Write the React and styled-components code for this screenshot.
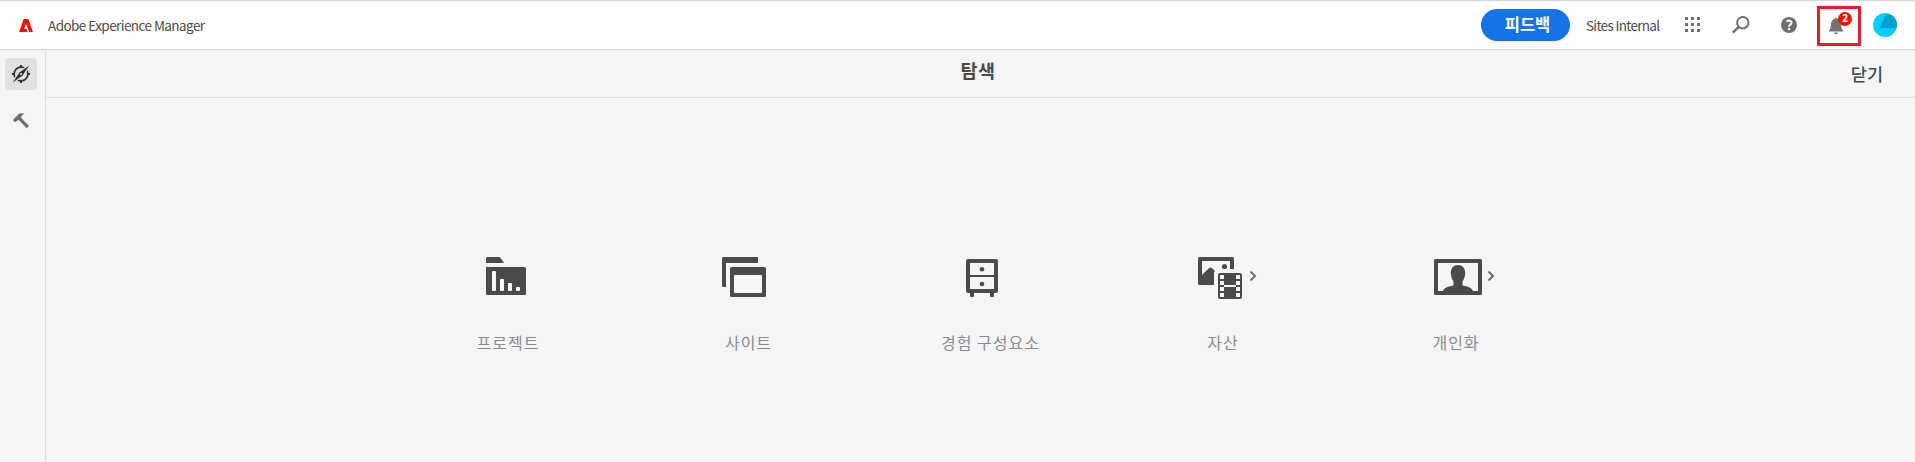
import React from "react";
import styled, { createGlobalStyle } from "styled-components";

const GlobalStyle = createGlobalStyle`
  * { box-sizing: border-box; }
  body {
    margin: 0;
    background: #f5f5f5;
    font-family: "Noto Sans CJK KR", "Noto Sans", sans-serif;
    color: #4b4b4b;
  }
`;

const Page = styled.div`
  display: flex;
  flex-direction: column;
  height: 100vh;
  overflow: hidden;
`;

const Header = styled.header`
  display: flex;
  align-items: center;
  flex: none;
  height: 50px;
  padding-left: 19px;
  background: #fff;
  border-top: 1px solid #d8d8d8;
  border-bottom: 1px solid #d3d3d3;
`;

const Brand = styled.span`
  margin-left: 15px;
  font-size: 13.5px;
  line-height: 20px;
  letter-spacing: -0.56px;
  white-space: nowrap;
`;

const Actions = styled.div`
  display: flex;
  align-items: center;
  margin-left: auto;
  height: 48px;
`;

const FeedbackButton = styled.button`
  width: 89px;
  height: 32px;
  padding: 0 0 2px 4px;
  border: 0;
  border-radius: 16px;
  background: #1473e6;
  color: #fff;
  font: bold 16.5px/28px "Noto Sans CJK KR", sans-serif;
  white-space: nowrap;
`;

const Organization = styled.span`
  width: 74px;
  margin: 0 9px 0 16px;
  font-size: 13.5px;
  line-height: 20px;
  letter-spacing: -0.68px;
  white-space: nowrap;
`;

const IconButton = styled.button`
  display: flex;
  align-items: center;
  justify-content: center;
  width: 48px;
  height: 48px;
  padding: 0;
  border: 0;
  background: none;
  color: #6e6e6e;
`;

const Notifications = styled.button`
  position: relative;
  display: flex;
  width: 44px;
  height: 40px;
  margin: 2px 12px 0 4px;
  padding: 8px 0 0 8px;
  border: 3px solid #ed1c24;
  background: none;
  color: #747474;
`;

const Badge = styled.span`
  position: absolute;
  top: 3px;
  left: 18px;
  width: 14px;
  height: 14px;
  border-radius: 50%;
  background: #fa0f00;
  color: #fff;
  font: bold 10px/13px "Open Sans", sans-serif;
  text-align: center;
`;

const Avatar = styled.svg`
  margin-right: 18px;
`;

const Body = styled.div`
  display: flex;
  flex: 1;
`;

const Rail = styled.nav`
  display: flex;
  flex-direction: column;
  align-items: center;
  gap: 15px;
  width: 46px;
  padding: 8px 4px 0 0;
  border-right: 1px solid #dcdcdc;
`;

const RailButton = styled.button`
  display: flex;
  align-items: center;
  justify-content: center;
  width: 32px;
  height: 32px;
  padding: 0;
  border: 0;
  border-radius: 4px;
  background: ${(p) => (p.$active ? "#e1e1e1" : "transparent")};
  color: ${(p) => (p.$active ? "#323232" : "#6e6e6e")};
`;

const Main = styled.main`
  flex: 1;
`;

const TitleBar = styled.div`
  display: grid;
  grid-template-columns: 1fr auto 1fr;
  height: 48px;
  border-bottom: 1px solid #dedede;
`;

const Title = styled.h1`
  grid-column: 2;
  margin: 0;
  padding: 7px 5px 0 0;
  font-size: 18.5px;
  font-weight: 700;
  line-height: 26px;
  letter-spacing: 0.5px;
`;

const CloseButton = styled.button`
  justify-self: end;
  align-self: start;
  margin-top: 11px;
  padding: 0 32px 0 0;
  border: 0;
  background: none;
  color: #4b4b4b;
  font: 500 17.5px/26px "Noto Sans CJK KR", sans-serif;
`;

const Tiles = styled.div`
  display: grid;
  grid-template-columns: repeat(5, 238px);
  justify-content: center;
  padding: 154px 0 0 3px;
`;

const Tile = styled.a`
  display: flex;
  flex-direction: column;
  align-items: center;
`;

const TileArt = styled.div`
  display: grid;
  grid-template-columns: 24px 48px 24px;
  align-items: center;
  color: #4b4b4b;
`;

const TileIcon = styled.svg`
  grid-column: 2;
`;

const Chevron = styled.svg`
  margin-left: 5px;
`;

const TileLabel = styled.span`
  margin-top: 29px;
  margin-left: ${(p) => p.$shift}px;
  color: #8c8c8c;
  font-size: 16px;
  line-height: 26px;
  letter-spacing: 1px;
  white-space: nowrap;
`;

const glyphs = {
  projects: (
    <>
      <path d="M4 11V6.500Q4 5 5.500 5H17Q18 5 18.600 5.900L22 11Z" />
      <path fillRule="evenodd" d="M4 15H42.500Q44 15 44 16.500V41.500Q44 43 42.500 43H5.500Q4 43 4 41.500ZM10 20V38Q10 39 11 39H13Q14 39 14 38V20Q14 19 13 19H11Q10 19 10 20ZM18 28V38Q18 39 19 39H21Q22 39 22 38V28Q22 27 21 27H19Q18 27 18 28ZM26 32V38Q26 39 27 39H29Q30 39 30 38V32Q30 31 29 31H27Q26 31 26 32ZM34 36V38Q34 39 35 39H37Q38 39 38 38V36Q38 35 37 35H35Q34 35 34 36Z" />
    </>
  ),
  sites: (
    <>
      <path d="M3.500 5H38V11H6V35H3.500Q2 35 2 33.500V6.500Q2 5 3.500 5Z" />
      <path fillRule="evenodd" d="M11.500 15H44.500Q46 15 46 16.500V43.500Q46 45 44.500 45H11.500Q10 45 10 43.500V16.500Q10 15 11.500 15ZM14 23V41H42V23Z" />
    </>
  ),
  fragments: (
    <>
      <path fillRule="evenodd" d="M10 7H38Q40 7 40 9V39Q40 41 38 41H36V44Q36 45 35 45H33Q32 45 32 44V41H16V44Q16 45 15 45H13Q12 45 12 44V41H10Q8 41 8 39V9Q8 7 10 7ZM12 11V23H36V11ZM12 25V37H36V25Z" />
      <circle cx="24" cy="17.200" r="2.300" />
      <circle cx="24" cy="32" r="2.300" />
    </>
  ),
  assets: (
    <>
      <path d="M3.500 5H36.500Q38 5 38 6.500V17H34V9H6V23L12.800 16.200Q14.500 14.800 16.200 16.200L19 19Q18 20 18 21V33H3.500Q2 33 2 31.500V6.500Q2 5 3.500 5Z" />
      <circle cx="28.500" cy="14.500" r="2.600" />
      <path fillRule="evenodd" d="M24 21H44Q46 21 46 23V45Q46 47 44 47H24Q22 47 22 45V23Q22 21 24 21ZM24 23V27H28V23ZM24 29V33H28V29ZM24 35V39H28V35ZM24 41V45H28V41ZM40 23V27H44V23ZM40 29V33H44V29ZM40 35V39H44V35ZM40 41V45H44V41ZM28 33V35H40V33Z" />
    </>
  ),
  personalization: (
    <>
      <path fillRule="evenodd" d="M1.500 7H46.500Q48 7 48 8.500V41.500Q48 43 46.500 43H1.500Q0 43 0 41.500V8.500Q0 7 1.500 7ZM4 11V39H44V11Z" />
      <path d="M24 13C28.500 13 31.200 16 31.200 21C31.200 25 29.700 27.700 28.500 29.500V33.500C34 34.500 38 35.800 39 39H9C10 35.800 14 34.500 19.500 33.500V29.500C18.300 27.700 16.800 25 16.800 21C16.800 16 19.500 13 24 13Z" />
    </>
  ),
};

const tiles = [
  { icon: "projects", label: "프로젝트", shift: 4 },
  { icon: "sites", label: "사이트", shift: 9 },
  { icon: "fragments", label: "경험 구성요소", shift: 17 },
  { icon: "assets", label: "자산", shift: 6, more: true },
  { icon: "personalization", label: "개인화", shift: -4, more: true },
];

function AdobeLogo() {
  return (
    <svg width="14" height="13" viewBox="0 0 14 13" fill="#fa0f00">
      <path d="M0 13L4.700 0H9.300L14 13H10.200L7 4.800L5.100 9.700H7.500L8.700 13Z" />
    </svg>
  );
}

function CompassIcon() {
  return (
    <svg width="18" height="18" viewBox="0 0 18 18" fill="currentColor">
      <circle cx="9" cy="9" r="6.900" fill="none" stroke="currentColor" strokeWidth="1.700" />
      <path d="M8 0H10V3H8ZM8 15H10V18H8ZM0 8H3V10H0ZM15 8H18V10H15Z" />
      <path d="M17.200 .6L10.600 10.600L.8 17.400L7.400 7.400Z" stroke="#e1e1e1" strokeWidth="2.400" paintOrder="stroke" />
      <circle cx="9" cy="9" r="1.100" fill="#e1e1e1" />
    </svg>
  );
}

function HammerIcon() {
  return (
    <svg width="18" height="18" viewBox="0 0 18 18" fill="currentColor">
      <path d="M1 8.500L2 6.700L6.500 2.200Q8.500 .7 12.300 1.700L9.300 4.200V6L17 13.900L14.800 16.200L7 8.300L5.500 8.200L3.200 10.300Z" />
    </svg>
  );
}

function AppsIcon() {
  return (
    <svg width="16" height="16" viewBox="0 0 16 16" fill="currentColor">
      {[0, 6, 12].map((y) =>
        [0, 6, 12].map((x) => <rect key={`${x}-${y}`} x={x} y={y} width="3" height="3" />)
      )}
    </svg>
  );
}

function SearchIcon() {
  return (
    <svg width="18" height="18" viewBox="0 0 18 18" fill="none" stroke="currentColor">
      <circle cx="10.800" cy="6.700" r="5.700" strokeWidth="1.900" />
      <path d="M6.700 10.800L.9 16.600" strokeWidth="2.400" />
    </svg>
  );
}

function HelpIcon() {
  return (
    <svg width="16" height="16" viewBox="0 0 16 16">
      <circle cx="8" cy="8" r="8" fill="currentColor" />
      <path d="M5.500 4.300Q8 3 9.700 4.100Q11.500 5.600 9.500 7.400Q8 8.600 8.200 9.700" fill="none" stroke="#fff" strokeWidth="2" />
      <circle cx="8.100" cy="12.100" r="1.300" fill="#fff" />
    </svg>
  );
}

function BellIcon() {
  return (
    <svg width="16" height="18" viewBox="0 0 16 18" fill="currentColor">
      <path d="M6.500 2Q6.500 .5 8 .5T9.500 2Q13 3 13 7Q13 11 14 12.300L15 13.300V14.500H1V13.300L2 12.300Q3 11 3 7Q3 3 6.500 2ZM6 15.500H10Q9.700 17.200 8 17.200T6 15.500Z" />
    </svg>
  );
}

export default function App() {
  return (
    <>
      <GlobalStyle />
      <Page>
        <Header>
          <AdobeLogo />
          <Brand>Adobe Experience Manager</Brand>
          <Actions>
            <FeedbackButton>피드백</FeedbackButton>
            <Organization>Sites Internal</Organization>
            <IconButton aria-label="Apps"><AppsIcon /></IconButton>
            <IconButton aria-label="Search"><SearchIcon /></IconButton>
            <IconButton aria-label="Help"><HelpIcon /></IconButton>
            <Notifications>
              <BellIcon />
              <Badge>2</Badge>
            </Notifications>
            <Avatar width="24" height="24" viewBox="0 0 24 24">
              <circle cx="12" cy="12" r="12" fill="#00ceff" />
              <path d="M12.300 2.700L6.500 15H23.600A12 12 0 0 0 20.500 3.500Q16 0 12.300 2.700Z" fill="#00a0cc" />
            </Avatar>
          </Actions>
        </Header>
        <Body>
          <Rail>
            <RailButton $active aria-label="Navigation"><CompassIcon /></RailButton>
            <RailButton aria-label="Tools"><HammerIcon /></RailButton>
          </Rail>
          <Main>
            <TitleBar>
              <Title>탐색</Title>
              <CloseButton>닫기</CloseButton>
            </TitleBar>
            <Tiles>
              {tiles.map((tile) => (
                <Tile key={tile.icon}>
                  <TileArt>
                    <TileIcon width="48" height="48" viewBox="0 0 48 48" fill="currentColor">
                      {glyphs[tile.icon]}
                    </TileIcon>
                    {tile.more && (
                      <Chevron width="8" height="12" viewBox="0 0 8 12" fill="none" stroke="#6e6e6e" strokeWidth="2">
                        <path d="M1.500 1.500L6 6L1.500 10.500" />
                      </Chevron>
                    )}
                  </TileArt>
                  <TileLabel $shift={tile.shift}>{tile.label}</TileLabel>
                </Tile>
              ))}
            </Tiles>
          </Main>
        </Body>
      </Page>
    </>
  );
}
